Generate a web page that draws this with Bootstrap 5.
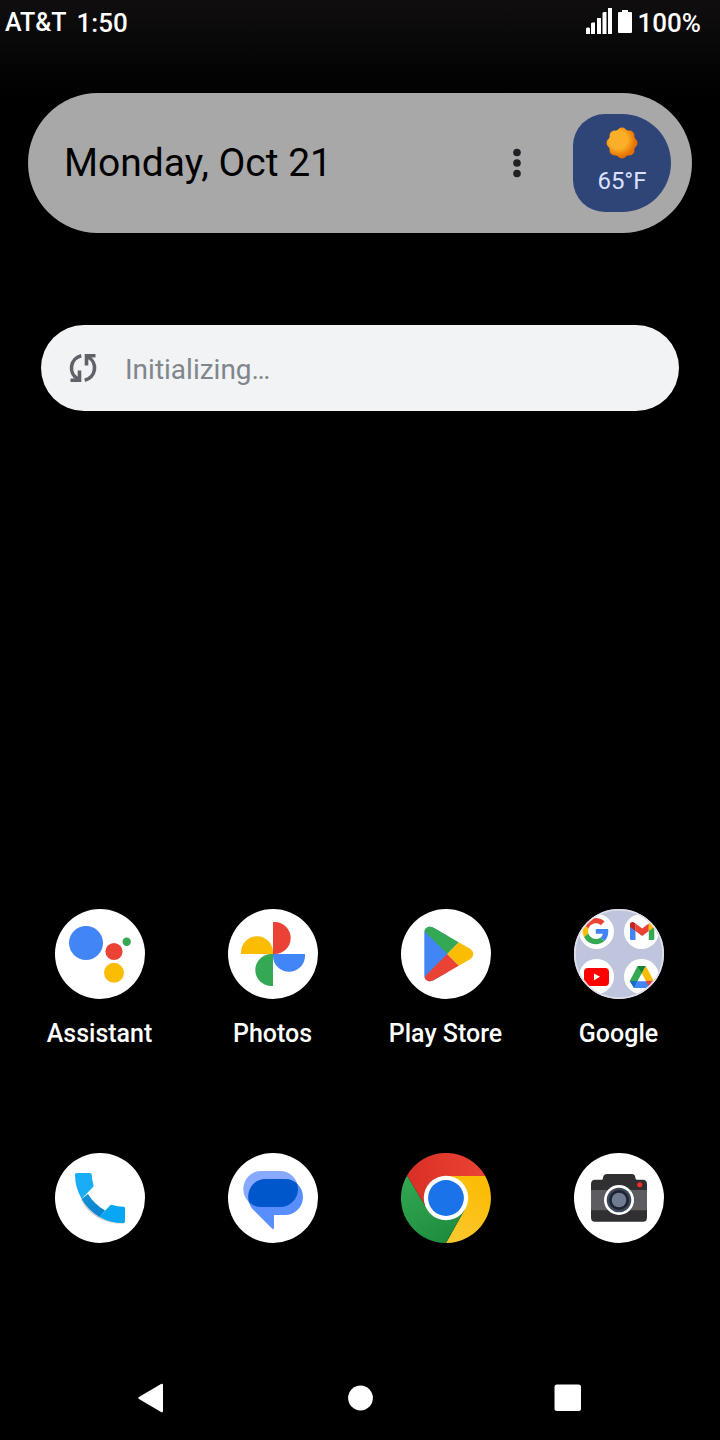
<!DOCTYPE html>
<html lang="en">
<head>
<meta charset="utf-8">
<meta name="viewport" content="width=device-width, initial-scale=1">
<title>Home screen</title>
<link href="https://cdn.jsdelivr.net/npm/bootstrap@5.3.0/dist/css/bootstrap.min.css" rel="stylesheet">
<style>
body{font-family:Roboto,"Noto Sans",sans-serif;color:#fff;background:#000 linear-gradient(#100e0f,#000 100px) no-repeat}
svg{display:block}
.status-bar{height:45px;font-size:26px;line-height:28px;font-weight:500;padding:0 19px 0 5px}
.carrier{font-size:25px;margin-right:10px}
.battery{margin:0 6px}
.glance{margin:48px 28px 0;height:140px;padding:0 21px 0 36px;background:#a8a8a8;color:#000}
.glance-date{font-size:39px;line-height:48px}
.weather{width:98px;height:98px;border-radius:32px 49px 49px 32px;background:#2f4578;color:#d9e2ff;font-size:24px;line-height:28px;margin-left:40px}
.search-pill{margin:92px 41px 0;height:86px;padding:0 26px;gap:26px;background:#f1f3f5}
.search-pill input{font-size:28px;line-height:36px;color:#80868b}
.search-pill input::placeholder{color:#80868b;opacity:1}
.apps{padding:0 15px 0 13px}
.dock{margin-top:104px;padding-bottom:110px}
.app-link{color:#fff;font-size:25px;line-height:30px;font-weight:500;gap:20px}
.nav-keys{height:87px;padding:2px 48px 0}
</style>
</head>
<body class="d-flex flex-column min-vh-100">
<header class="status-bar d-flex align-items-center">
  <span class="carrier">AT&amp;T</span><span>1:50</span>
  <svg class="ms-auto mb-1" width="26" height="28" viewBox="0 0 26 28" fill="#fff" aria-label="Signal"><path d="M0 21.500l1-1h2l1 1V27H0zM5 16.500l1-1h3V27H5zM11 11h4v16h-4zM16.500 6l1-1h3v22h-4zM22 1h4v26h-4z"/></svg>
  <svg class="battery mb-1" width="14" height="28" viewBox="0 0 14 28" fill="#fff" aria-label="Battery"><path d="M4 3h6v2h3q1 0 1 1v19q0 1-1 1H1q-1 0-1-1V6q0-1 1-1h3z"/></svg>
  <span>100%</span>
</header>
<main class="d-flex flex-column flex-grow-1">
  <section class="glance rounded-pill d-flex align-items-center">
    <span class="glance-date me-auto">Monday, Oct 21</span>
    <button class="btn border-0 p-2" type="button" aria-label="More options"><svg width="16" height="32" viewBox="0 0 16 32" fill="#202124"><circle cx="8" cy="5.500" r="3.800"/><circle cx="8" cy="16" r="3.800"/><circle cx="8" cy="26.500" r="3.800"/></svg></button>
    <div class="weather d-flex flex-column align-items-center justify-content-center pb-1">
      <svg width="32" height="32" viewBox="0 0 32 32"><defs><radialGradient id="sun" gradientUnits="userSpaceOnUse" cx="12.500" cy="13" r="20"><stop offset=".45" stop-color="#fbae27"/><stop offset=".85" stop-color="#e87000"/></radialGradient></defs><g fill="url(#sun)"><circle cx="16" cy="16" r="13.800"/><circle cx="16" cy="5.500" r="5"/><circle cx="23.400" cy="8.600" r="5"/><circle cx="26.500" cy="16" r="5"/><circle cx="23.400" cy="23.400" r="5"/><circle cx="16" cy="26.500" r="5"/><circle cx="8.600" cy="23.400" r="5"/><circle cx="5.500" cy="16" r="5"/><circle cx="8.600" cy="8.600" r="5"/></g></svg>
      <span class="mt-2">65°F</span>
    </div>
  </section>
  <div class="search-pill rounded-pill d-flex align-items-center">
    <svg class="flex-shrink-0" width="32" height="32" viewBox="0 0 32 32" fill="none" stroke="#5f6368" stroke-width="3.600"><path d="M14.300 3.800A12.500 12.500 0 0 0 11 27M17.700 28.200A12.500 12.500 0 0 0 21 5"/><path d="M3.500 28.200h9V18.500M28.500 3.800h-9V13.500"/></svg>
    <input class="form-control-plaintext p-0 pt-1" type="text" placeholder="Initializing…" aria-label="Search" readonly>
  </div>
  <nav class="apps mt-auto" aria-label="Apps">
    <div class="row row-cols-4 g-0 text-center">
      <div class="col"><a class="app-link text-decoration-none d-flex flex-column align-items-center" href="#assistant">
        <svg width="90" height="90" viewBox="0 0 90 90"><circle cx="45" cy="45" r="45" fill="#fff"/><circle cx="31" cy="34" r="17" fill="#4285f4"/><circle cx="59" cy="42.500" r="8.600" fill="#ea4335"/><circle cx="71.700" cy="32.700" r="4.200" fill="#34a853"/><circle cx="59" cy="63.700" r="10" fill="#fbbc04"/></svg>
        <span>Assistant</span></a></div>
      <div class="col"><a class="app-link text-decoration-none d-flex flex-column align-items-center" href="#photos">
        <svg width="90" height="90" viewBox="0 0 90 90"><circle cx="45" cy="45" r="45" fill="#fff"/><defs><path id="petal" d="M45 13h1.700a16 16 0 0 1 0 32H45z"/></defs><use href="#petal" fill="#ea4335"/><use href="#petal" fill="#4285f4" transform="rotate(90 45 45)"/><use href="#petal" fill="#34a853" transform="rotate(180 45 45)"/><use href="#petal" fill="#fbbc04" transform="rotate(270 45 45)"/></svg>
        <span>Photos</span></a></div>
      <div class="col"><a class="app-link text-decoration-none d-flex flex-column align-items-center" href="#play">
        <svg width="90" height="90" viewBox="0 0 90 90"><circle cx="45" cy="45" r="45" fill="#fff"/><clipPath id="playShape"><path d="M23.300 24C23.300 18.500 28 16.300 32.500 18.700L69.500 40Q75 45 69.500 50L32.500 71.300C28 73.700 23.300 71.500 23.300 66z"/></clipPath><g clip-path="url(#playShape)"><path fill="#4285f4" d="M20 15h26.300v60H20z"/><path fill="#34a853" d="M20 18.700V10h61L46.300 45z"/><path fill="#ea4335" d="M20 71.300V80h61L46.300 45z"/><path fill="#fbbc04" d="M46.300 45L81 10v70z"/></g></svg>
        <span>Play Store</span></a></div>
      <div class="col"><a class="app-link text-decoration-none d-flex flex-column align-items-center" href="#google">
        <svg width="90" height="90" viewBox="0 0 90 90"><clipPath id="folder"><circle cx="45" cy="45" r="45"/></clipPath><g clip-path="url(#folder)"><path fill="#bfc5dc" d="M0 0h90v90H0z"/><g fill="#fff"><circle cx="22.500" cy="22.500" r="17.500"/><circle cx="67.500" cy="22.500" r="17.500"/><circle cx="22.500" cy="67.500" r="17.500"/><circle cx="67.500" cy="67.500" r="17.500"/></g>
        <g transform="translate(8.700 9) scale(.545)"><path fill="#ea4335" d="M24 9.500c3.540 0 6.710 1.220 9.210 3.600l6.850-6.850C35.900 2.380 30.470 0 24 0 14.620 0 6.510 5.380 2.560 13.220l7.980 6.190C12.430 13.720 17.740 9.500 24 9.500z"/><path fill="#4285f4" d="M46.980 24.550c0-1.570-.15-3.090-.38-4.550H24v9.020h12.940c-.58 2.960-2.260 5.480-4.780 7.180l7.730 6c4.510-4.180 7.090-10.360 7.090-17.650z"/><path fill="#fbbc05" d="M10.530 28.590A14.500 14.500 0 0 1 10.530 19.410l-7.980-6.190a24 24 0 0 0 0 21.560z"/><path fill="#34a853" d="M24 48c6.480 0 11.930-2.130 15.890-5.810l-7.730-6C30 37.640 27.240 38.490 24 38.490c-6.260 0-11.570-4.220-13.470-9.910l-7.980 6.190C6.510 42.620 14.620 48 24 48z"/></g>
        <path fill="#4285f4" d="M56 17.500l5.500 4V31H57.500Q56 31 56 29.500z"/><path fill="#34a853" d="M80.300 17.500l-5.500 4V31h4q1.500 0 1.500-1.500z"/><path fill="#ea4335" d="M61.500 14.500L68.200 19.500L74.800 14.500V22L68.200 27L61.500 22z"/><path fill="#c5221f" d="M56 15.500C56 12.500 59 12 61.500 14.500V22L56 18z"/><path fill="#fbbc04" d="M80.300 15.500C80.300 12.500 77.300 12 74.800 14.500V22L80.300 18z"/>
        <rect x="10" y="59" width="25" height="18" rx="4" fill="#f00"/><path fill="#fff" d="M20 64.500l6 3.200-6 3.500z"/>
        <path fill="#34a853" d="M63.500 57h8.300L60 79 55.800 72z"/><path fill="#188038" d="M63.500 57h8.300l-4 7z"/><path fill="#fbbc04" d="M71.800 57l8 14.700h-8.300L67.800 64.300z"/><path fill="#4285f4" d="M63.500 72.200h16.300L76 79H60z"/><path fill="#1967d2" d="M63.500 72.200L60 79l-4.200-7z"/><path fill="#ea4335" d="M71.500 71.700h8.300L76 79z"/><path fill="#fff" d="M67.700 64.800l3.800 7h-7.700z"/></g><circle cx="45" cy="45" r="44.200" fill="none" stroke="#e1e0ec" stroke-width="1.600"/></svg>
        <span>Google</span></a></div>
    </div>
  </nav>
  <nav class="apps dock" aria-label="Favorites">
    <div class="row row-cols-4 g-0">
      <div class="col"><a class="d-flex justify-content-center" href="#phone" aria-label="Phone"><svg width="90" height="90" viewBox="0 0 90 90"><defs><linearGradient id="tube" x2="1" y2="1"><stop stop-color="#1893d8"/><stop offset="1" stop-color="#087fce"/></linearGradient></defs><circle cx="45" cy="45" r="45" fill="#fff"/><path d="M26 46.500Q38 70.800 69 70.800L60 66 44 61 33 50z" fill="#777" opacity=".35"/><path fill="url(#tube)" d="M33 41Q39 51 50 57.500L44.500 64Q33 57 26.500 46z"/><path fill="#19adf5" d="M21.500 20H35q1.500 0 1.700 1.500Q37 27 38.500 32q.3 1.300-.7 2.300L26.700 45.700Q20 35 20 21.500 20 20 21.500 20z"/><path fill="#07a7f4" d="M44.300 63.700L55.200 52.300q1-.8 2.300-.4Q62 53.500 68.500 53.800 70 54 70 55.300V68.500q0 1.500-1.500 1.500Q55 70 44.300 63.700z"/></svg></a></div>
      <div class="col"><a class="d-flex justify-content-center" href="#messages" aria-label="Messages"><svg width="90" height="90" viewBox="0 0 90 90"><circle cx="45" cy="45" r="45" fill="#fff"/><clipPath id="bubble"><rect x="15.300" y="18" width="54.700" height="36" rx="18"/></clipPath><rect x="15.300" y="18" width="54.700" height="36" rx="18" fill="#87a9ff"/><path fill="#598eff" d="M38 26H57a18 18 0 0 1 0 36H46V75Q45.500 77 44 75.500L24 55.500C16 45 21 26 38 26z"/><path clip-path="url(#bubble)" fill="#0057cc" d="M38 26H57a18 18 0 0 1 0 36H46L24 55.500C16 45 21 26 38 26z"/></svg></a></div>
      <div class="col"><a class="d-flex justify-content-center" href="#chrome" aria-label="Chrome"><svg width="90" height="90" viewBox="0 0 90 90"><defs><linearGradient id="cr"><stop stop-color="#d93025"/><stop offset="1" stop-color="#ea4335"/></linearGradient><linearGradient id="cg" x1=".6" y1="1" x2="0" y2="0"><stop stop-color="#1e8e3e"/><stop offset="1" stop-color="#34a853"/></linearGradient><linearGradient id="cy" x1="0" y1="1" x2=".5" y2="0"><stop stop-color="#fcc934"/><stop offset="1" stop-color="#fbbc04"/></linearGradient></defs><path fill="url(#cr)" d="M6 22.500a45 45 0 0 1 78 0L84.300 23H45L26 56z"/><path fill="url(#cy)" d="M45 23H84.200A45 45 0 0 1 45 90L64 56z"/><path fill="url(#cg)" d="M6 22.500A45 45 0 0 0 45 90L64 56 45 67 26 56z"/><circle cx="45" cy="45" r="22.200" fill="#fff"/><circle cx="45" cy="45" r="17.900" fill="#1a73e8"/></svg></a></div>
      <div class="col"><a class="d-flex justify-content-center" href="#camera" aria-label="Camera"><svg width="90" height="90" viewBox="0 0 90 90"><circle cx="45" cy="45" r="45" fill="#fff"/><path fill="#303032" d="M21 26.700h7q1 0 1-2 .5-3.700 4-3.700h25q3 0 3.400 3.700 0 2 1.600 2h6q4 0 4 4.500v33q0 4.500-4 4.500H21q-4 0-4-4.500v-33q0-4.500 4-4.500z"/><path fill="#5d5c61" d="M17 37h56v20.300H17z"/><circle cx="45" cy="47" r="15" fill="#fff"/><circle cx="45" cy="47" r="12.300" fill="#3e485c"/><circle cx="45" cy="47" r="10" fill="#202430"/><circle cx="45" cy="47" r="7.300" fill="#727c90"/><circle cx="65.700" cy="31.800" r="2.500" fill="#ff2a21"/></svg></a></div>
    </div>
  </nav>
</main>
<footer class="nav-keys">
  <div class="row g-0 h-100 align-items-center text-center">
    <div class="col"><button class="btn border-0 p-0" type="button" aria-label="Back"><svg width="28" height="30" viewBox="0 0 28 30" fill="#fff"><path d="M1 14L23 1Q25 0 25 2V28q0 2-2 1L1 16Q-.5 15 1 14z"/></svg></button></div>
    <div class="col"><button class="btn border-0 p-0" type="button" aria-label="Home"><svg width="28" height="30" viewBox="0 0 28 30" fill="#fff"><circle cx="14.500" cy="15" r="12.400"/></svg></button></div>
    <div class="col"><button class="btn border-0 p-0" type="button" aria-label="Recents"><svg width="28" height="30" viewBox="0 0 28 30" fill="#fff"><rect x=".5" y="1.500" width="26.500" height="26.500" rx="2.500"/></svg></button></div>
  </div>
</footer>
<script src="https://cdn.jsdelivr.net/npm/bootstrap@5.3.0/dist/js/bootstrap.bundle.min.js"></script>
</body>
</html>
